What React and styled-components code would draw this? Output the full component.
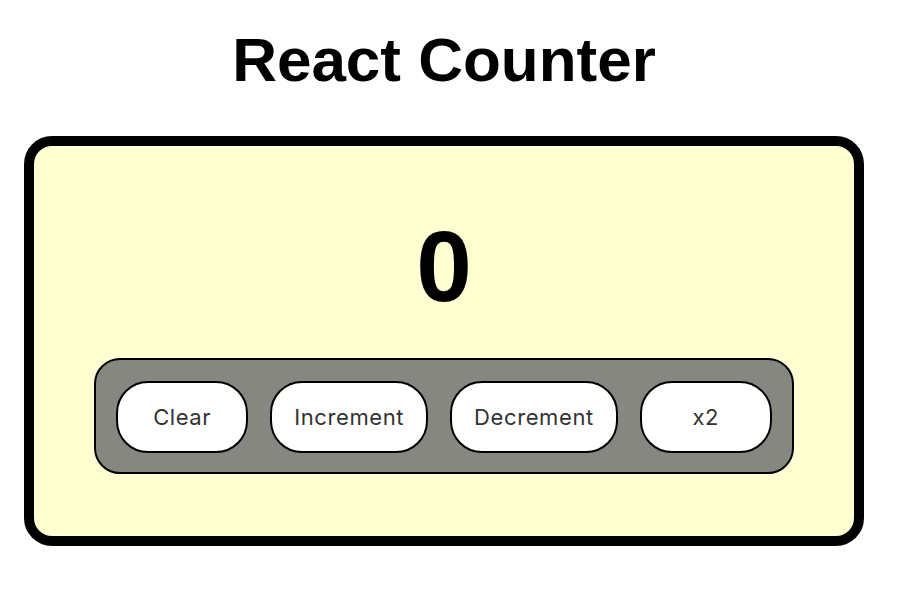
import React, { useState } from 'react'
import styled, { createGlobalStyle } from 'styled-components'

const GlobalStyle = createGlobalStyle`
  body {
    margin: 0;
    background: #ffffff;
    font-family: 'Liberation Sans', Arial, sans-serif;
  }
`

const Page = styled.div`
  width: 888px;
  display: flex;
  flex-direction: column;
  align-items: center;
`

const Title = styled.h1`
  margin: 24px 0 41px;
  font-family: 'Liberation Sans', Arial, sans-serif;
  font-size: 62px;
  line-height: 71px;
  font-weight: 700;
  color: #000;
`

const Card = styled.div`
  box-sizing: border-box;
  width: 840px;
  height: 410px;
  padding-top: 64px;
  background: #ffffd2;
  border: 10px solid #000;
  border-radius: 28px;
  display: flex;
  flex-direction: column;
  align-items: center;
`

const Count = styled.div`
  font-family: 'Liberation Sans', Arial, sans-serif;
  font-size: 100px;
  line-height: 112px;
  font-weight: 700;
  color: #000;
`

const Controls = styled.div`
  margin-top: 36px;
  display: flex;
  gap: 22px;
  padding: 21px 20px 19px;
  background: #878782;
  border: 2px solid #000;
  border-radius: 26px;
`

const Button = styled.button`
  box-sizing: border-box;
  height: 72px;
  min-width: 132px;
  padding: 0 22px;
  background: #fff;
  border: 2px solid #000;
  border-radius: 32px;
  font-family: Inter, 'Noto Sans', sans-serif;
  font-size: 22px;
  letter-spacing: 0.6px;
  color: #333;
  cursor: pointer;
`

export default function App() {
  const [count, setCount] = useState(0)

  return (
    <Page>
      <GlobalStyle />
      <Title>React Counter</Title>
      <Card>
        <Count>{count}</Count>
        <Controls>
          <Button onClick={() => setCount(0)}>Clear</Button>
          <Button onClick={() => setCount(count + 1)}>Increment</Button>
          <Button onClick={() => setCount(count - 1)}>Decrement</Button>
          <Button onClick={() => setCount(count * 2)}>x2</Button>
        </Controls>
      </Card>
    </Page>
  )
}
